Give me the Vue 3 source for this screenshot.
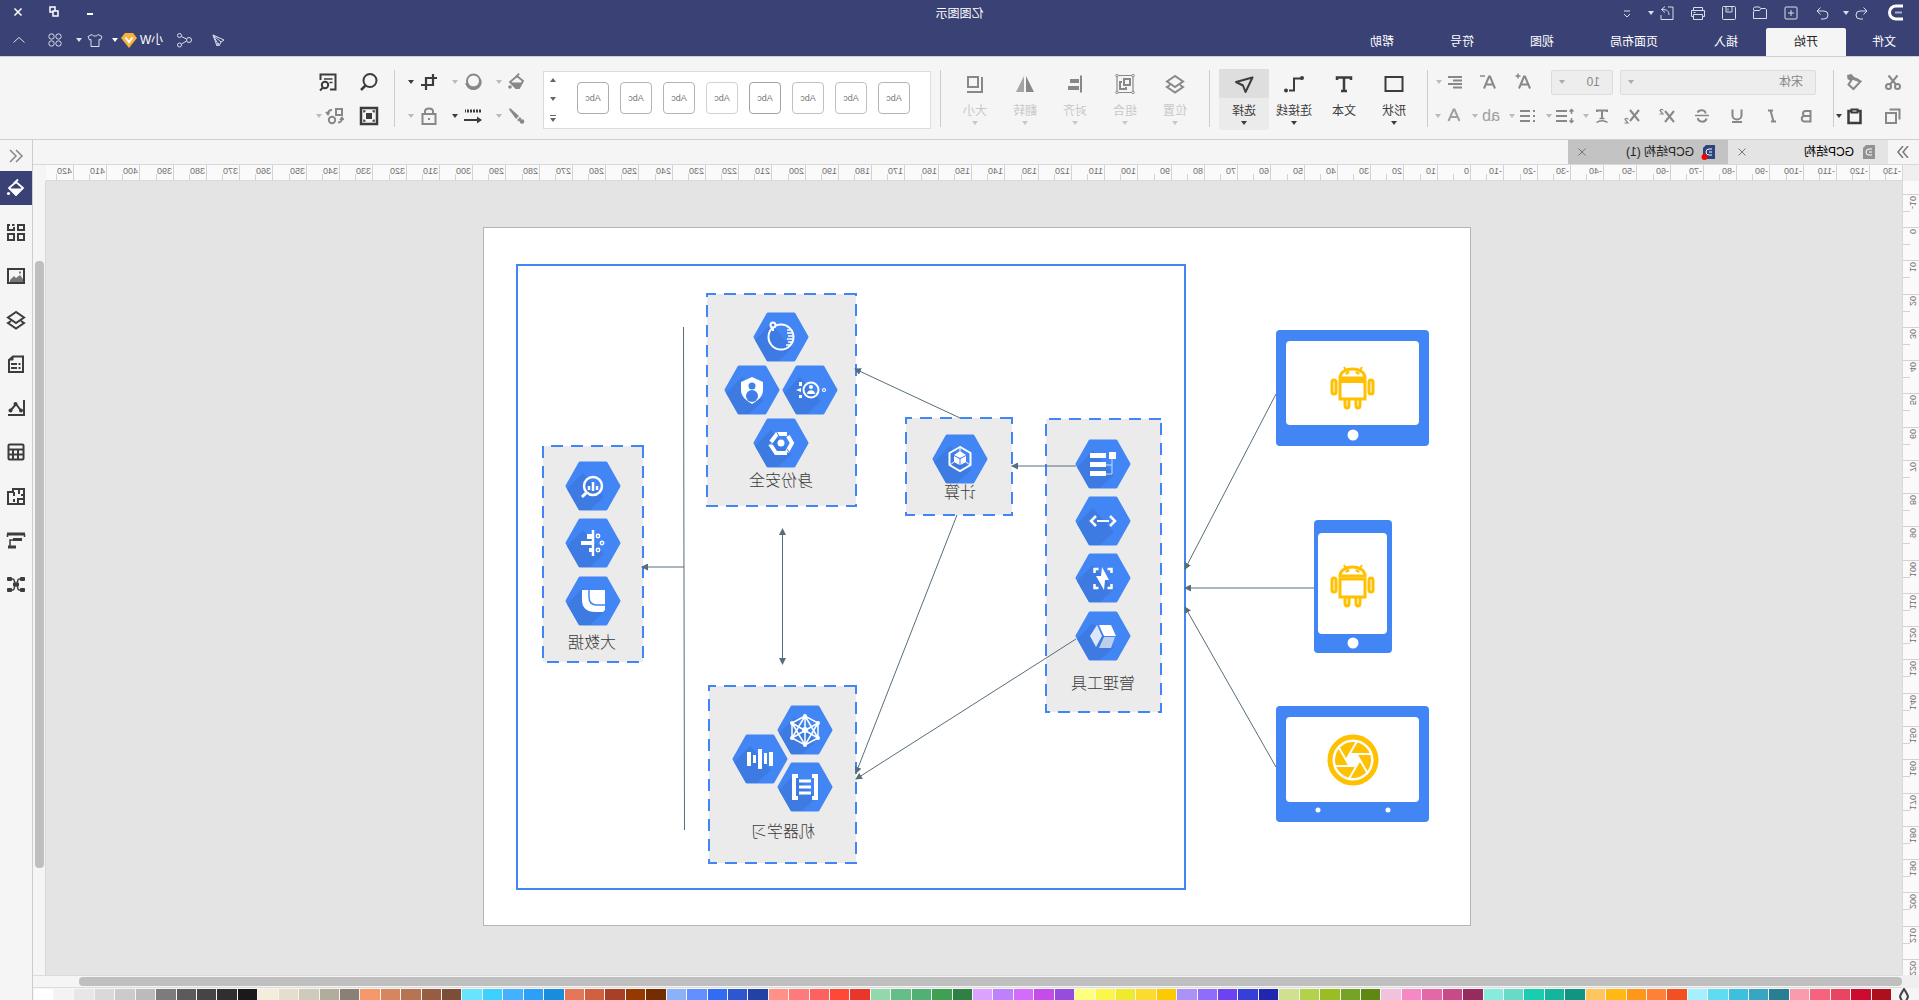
<script setup>
import { h } from 'vue'

/* 20x20 line glyphs, drawn in the writing direction of the text */
const glyphs = {
  undo: '<path d="M5 8h7a4 4 0 0 1 0 8H9M8.500 4.500L5 8l3.500 3.500"/>',
  redo: '<path d="M15 8H8a4 4 0 0 0 0 8h3M11.500 4.500L15 8l-3.500 3.500"/>',
  add: '<rect x="4" y="4" width="12" height="12" rx="1"/><path d="M10 7v6M7 10h6"/>',
  open: '<path d="M3.500 15.500V6.500l1-1H9l1.500 2H15l1.500 1v7zM9.500 5.500l1-1.500h5l1 1.500v2"/>',
  save: '<rect x="3.500" y="3.500" width="13" height="13" rx="1"/><path d="M7 4v5h6V4M11 5.500v2"/>',
  print: '<path d="M5.500 7.500v-3h9v3M5.500 13.500h-2v-6h13v6h-2M5.500 11.500h9v5h-9zM12.500 9.500h2"/>',
  export: '<path d="M9 4H4v12.500h12V12M8 12c0-4 2-5.500 7-5.500M12 3.500l3.500 3L12 9.500"/>',
  more: '<path d="M7 8h6M7 11l3 3 3-3"/>',
  min: '<path stroke-width="2" d="M7 12h6"/>',
  restore: '<path stroke-width="1.500" d="M6 9h5v5H6zM9 8.500V5h5v5h-2.500"/>',
  close: '<path stroke-width="1.500" d="M6.500 6.500l7 7M13.500 6.500l-7 7"/>',
  shut: '<path d="M6.500 6.500l7 7M13.500 6.500l-7 7"/>',
  send: '<path d="M16 5L5 10l3 2 2 4zM16 5l-8 7M16 5l-4 11-2-3"/>',
  share: '<circle cx="5" cy="10" r="2.500"/><circle cx="14.500" cy="5.500" r="2"/><circle cx="14.500" cy="15" r="2"/><path d="M7.500 9l5-2.500M7.500 11l5 3"/>',
  shirt: '<path d="M7 4.500c1 2 5 2 6 0l4 2-1.500 3.500-1.500-.5v7H6v-7l-1.500.5L3 6.500z"/>',
  four: '<circle cx="6.500" cy="6.500" r="2.700"/><circle cx="13.500" cy="6.500" r="2.700"/><circle cx="6.500" cy="13.500" r="2.700"/><circle cx="13.500" cy="13.500" r="2.700"/>',
  up: '<path d="M4.500 12.500L10 7.500l5.500 5"/>',
  cut: '<g stroke-width="2"><circle cx="5.500" cy="14.500" r="2.500"/><circle cx="14.500" cy="14.500" r="2.500"/><path d="M7 12.500L14.500 3.500M13 12.500L5.500 3.500"/></g>',
  brush: '<path stroke-width="2" d="M4.500 9.500l8-3 4 6-5 4.500z"/><path fill="currentColor" stroke="none" d="M4 10l2-3 5-2 2.500-3L18 3l-.5 4-3 2-2-1.500z"/>',
  copy: '<g stroke-width="2"><rect x="7" y="7" width="10" height="10"/><path d="M3.500 13.500v-10h10"/></g>',
  paste: '<path stroke-width="2.500" d="M7 5H4.500v12h12V5H14"/><path stroke-width="2" d="M7.500 3.500h6v3h-6z"/>',
  bigger: '<path stroke-width="2" d="M3 16.500L8 4.500h1l5 12M5 12.500h7"/><path stroke-width="1.500" d="M15 1.500v5M12.500 4h5"/>',
  smaller: '<path stroke-width="2" d="M3 16.500L8 4.500h1l5 12M5 12.500h7"/><path stroke-width="1.500" d="M13 4h5"/>',
  align: '<path stroke-width="2" d="M3 5h14M3 8.500h9M3 12h14M3 15.500h9"/>',
  bold: '<path stroke-width="2" d="M6.500 5h5a2.300 2.300 0 0 1 0 5h-5zM6.500 10h6a2.500 2.500 0 0 1 0 5.500h-6z"/>',
  italic: '<path stroke-width="2" d="M9 4.500h5M6 15.500h5M11.500 4.500l-3 11"/>',
  under: '<path stroke-width="2" d="M5.500 3.500v6a4.500 4 0 0 0 9 0v-6M5 16h10"/>',
  strike: '<path stroke-width="2" d="M14.500 6.500C13 3 6 3.500 6.500 7.500M5.500 12.500c1 4.500 9 4 8.500-.5"/><path stroke-width="1.500" d="M3 9.500h14"/>',
  sup: '<path stroke-width="2" d="M3 5l9 11M12 5L3 16"/><path stroke-width="1.200" d="M14 4.500c0-1.500 3-1.500 3 0L14 8h3.500"/>',
  sub: '<path stroke-width="2" d="M3 4l9 11M12 4L3 15"/><path stroke-width="1.200" d="M14 13.500c0-1.500 3-1.500 3 0L14 17h3.500"/>',
  tstyle: '<path stroke-width="2" d="M5 6V4.500h10V6M10 4.500v8"/><path stroke-width="1.500" d="M7.500 12.500h5M4.500 16.500c3-2.500 8-2.500 11 0"/>',
  spacing: '<path stroke-width="2" d="M8 5h11M8 10h11M8 15h11"/><path stroke-width="1.500" d="M3.500 4v4M3.500 12v4M1.500 5.500l2-2 2 2M1.500 14.500l2 2 2-2"/>',
  bullets: '<path stroke-width="2" d="M8 5h10M8 10h10M8 15h10M3 5h2M3 10h2M3 15h2"/>',
  fontcolor: '<path stroke-width="2" d="M4.500 15L9.500 3.500h1l5 11.500M6.500 11h7"/>',
  rect: '<path stroke-width="2" d="M1.500 3h17v14h-17z"/>',
  text: '<path stroke-width="2.500" d="M3 6V3.500h14V6M10 3.500V17M7 17h6"/>',
  connector: '<path stroke-width="2" d="M1.500 4.500H10v12h5"/><circle cx="2" cy="4" r="2" fill="currentColor" stroke="none"/><circle cx="18" cy="16.500" r="2" fill="currentColor" stroke="none"/>',
  pointer: '<path stroke-width="2" stroke-linejoin="round" d="M1.500 3.500L18 8l-7 3.500L8.500 18z"/>',
  layers: '<path stroke-width="2" d="M10 2l8 5.500-8 5.500-8-5.500zM5 11l-3 2 8 5.500 8-5.500-3-2"/>',
  group: '<path stroke-width="1.200" d="M2 1.500h16v17H2z"/><path stroke-width="2" d="M5 5h6v6H5zM13 8h2v7H9v-2"/><g fill="#f5f5f5" stroke-width="1"><circle cx="2" cy="1.500" r="1.300"/><circle cx="18" cy="1.500" r="1.300"/><circle cx="2" cy="18.500" r="1.300"/><circle cx="18" cy="18.500" r="1.300"/></g>',
  alignobj: '<path stroke-width="2" d="M4 1.500v17"/><path stroke="none" fill="currentColor" d="M6 5h9v4H6zM6 12h11v4H6z"/>',
  flip: '<path stroke="none" fill="currentColor" d="M9 2v16H1z"/><path stroke="none" fill="currentColor" opacity=".75" d="M11 2v16h8z"/>',
  size: '<path stroke-width="2" d="M7 3h10v10H7zM3 3v15h15"/>',
  fill: '<path stroke-width="1.800" d="M4 9l6-5 7 6-6 6H8z"/><path stroke="none" fill="currentColor" d="M4 10.500h12L11 17H8z"/><path stroke-width="1.800" d="M8 1.500l3 4"/><circle cx="17" cy="15" r="1.800" stroke="none" fill="currentColor"/>',
  pen: '<path stroke="none" fill="currentColor" d="M17 2l1 1.500-7 9.500-3-3zM7 11l3 3-2 1.500L5.500 13z"/><circle cx="5" cy="15.500" r="2.300" stroke="none" fill="currentColor"/>',
  shadow: '<path stroke="none" fill="currentColor" d="M2 7a8 8 0 1 0 15 6z"/><circle cx="9.500" cy="9" r="6.500" stroke-width="2" fill="#f5f5f5"/><path stroke-width="2" d="M5 14a8 8 0 0 0 12-3"/>',
  lines: '<path stroke-width="3" stroke-dasharray="2 1" d="M2 5h16"/><path stroke-width="2" d="M4 14h15"/><path stroke="none" fill="currentColor" d="M1 14l5-3.500v7z"/>',
  crop: '<path stroke-width="2.200" d="M6 2v11h12M2 6h11v12"/>',
  lock: '<rect x="3.500" y="8" width="13" height="10" stroke-width="2"/><path stroke-width="2" d="M6 8V5.500C6 1.500 14 1.500 14 5.500V8"/><path stroke-width="2" d="M9 13h2"/>',
  search: '<circle cx="9" cy="8.500" r="6.500" stroke-width="2"/><path stroke-width="2.500" d="M13.500 13.500L18 18"/>',
  fit: '<path stroke-width="2.500" d="M2 2h16v16H2z"/><path stroke="none" fill="currentColor" d="M7 7h6v6H7z"/><path stroke-width="1.500" d="M5 6.500V5h1.500M13.500 5H15v1.500M5 13.500V15h1.500M13.500 15H15v-1.500"/>',
  find: '<path stroke-width="2" d="M8 17.500H2.500v-15h15V8"/><path stroke-width="1.500" d="M5.500 7H14M5.500 10.500h3"/><circle cx="13" cy="13" r="3.200" stroke-width="2"/><path stroke-width="2" d="M15 15.500l3 3"/>',
  replace: '<path stroke-width="2" d="M3 3h6v6H3z"/><circle cx="13" cy="14" r="3.200" stroke-width="2"/><path stroke-width="1.800" d="M13 4c3 0 4 1 4 4M15.500 6l1.500 2.500L19 6M3 12c0 3 1 4.500 4 4.500M1.500 14l1.500-2.500L5 14"/>',
  dashes: '<path stroke-width="1.500" d="M10 4l-6 6 6 6M16 4l-6 6 6 6"/>',
  bucket: '<path stroke-width="1.800" d="M3 10l7-6 7 6-7 7z"/><path stroke="none" fill="currentColor" d="M3 10.500h14L10 18z"/><path stroke-width="2" d="M8 1.500l4 4"/><circle cx="17.500" cy="15.500" r="1.600" stroke="none" fill="currentColor"/>',
  apps: '<path stroke-width="2" d="M2 3h6v5H2zM2 12h6v6H2zM12 12h6v6h-6zM12 5v3h6V3h-2M11.500 3H14"/>',
  image: '<path stroke-width="2" d="M2 3h16v14H2z"/><path stroke="none" fill="#777" d="M3 16v-3l3-4 4 3 2-2 4 4v2z"/><path stroke-width="2" stroke="#777" d="M5 6.500h2"/>',
  note: '<path stroke-width="2" d="M3 2.500h10L17 6v12H3zM9 10h6M9 14h6M5.500 10h2M5.500 14h2"/><path fill="currentColor" d="M13 2.500V6h4z"/>',
  chart: '<path stroke-width="2" d="M2 2v15h16M5.500 12L10 6l5 6"/><g stroke="none" fill="currentColor"><circle cx="5" cy="12.500" r="2"/><circle cx="10.500" cy="6" r="2"/><circle cx="15.500" cy="12.500" r="2"/></g>',
  table: '<rect x="2.500" y="2.500" width="15" height="15" rx="1" stroke-width="2"/><path stroke-width="2" d="M3 7.500h14M3 12.500h14M8 8v9M13 8v9"/>',
  plan: '<path stroke-width="2" d="M2 3h11v3h5v12H2zM2 9h3M7 3v5M12 6v4M2 13h6M8 12v6M12 13v3"/>',
  gantt: '<path stroke-width="3" d="M1 4h18"/><path stroke-width="1.500" d="M8 10h8v6"/><path stroke-width="3" d="M4 9.500h9M10 17h8"/><path stroke-width="1.500" d="M1.500 4v3M18.500 4v3"/>',
  mind: '<path stroke-width="1.500" d="M3 5h4c2 0 1 5 3 5s1-5 3-5h4M3 16h4c2 0 1-6 3-6s1 6 3 6h4"/><g stroke="none" fill="currentColor"><rect x="1" y="3" width="5" height="4" rx="1"/><rect x="14" y="3" width="5" height="4" rx="1"/><rect x="1" y="14" width="5" height="4" rx="1"/><rect x="14" y="14" width="5" height="4" rx="1"/><rect x="7" y="8.500" width="6" height="4" rx="1"/></g>',
  drop: '<path stroke-width="2" d="M10 4c-3 5-4 6-4 8l2 4h4l2-4c0-2-1-3-4-8z"/>'
}

const Icon = (props) =>
  h('svg', {
    viewBox: '0 0 20 20',
    width: 20,
    height: 20,
    fill: 'none',
    stroke: 'currentColor',
    'aria-hidden': 'true',
    innerHTML: glyphs[props.name]
  })
Icon.props = ['name']

const Caret = () =>
  h('svg', { class: 'caret', viewBox: '0 0 6 4', width: 6, height: 4, fill: 'currentColor', 'aria-hidden': 'true' }, [
    h('path', { d: 'M0 0h6L3 4z' })
  ])

const quick = [
  { icon: 'undo', label: '撤销', caret: true },
  { icon: 'redo', label: '恢复' },
  { icon: 'add', label: '新建' },
  { icon: 'open', label: '打开' },
  { icon: 'save', label: '保存' },
  { icon: 'print', label: '打印' },
  { icon: 'export', label: '导出', caret: true },
  { icon: 'more', label: '更多' }
]
const menus = ['文件', '开始', '插入', '页面布局', '视图', '符号', '帮助']
const fontRow = [
  ['bold', '加粗'], ['italic', '斜体'], ['under', '下划线'],
  ['strike', '删除线'], ['sup', '上标'], ['sub', '下标']
]
const paraRow = [['tstyle', '文字样式'], ['spacing', '行距'], ['bullets', '项目符号']]
const tools = [
  { icon: 'rect', label: '形状', caret: true },
  { icon: 'text', label: '文本' },
  { icon: 'connector', label: '连接线', caret: true },
  { icon: 'pointer', label: '选择', caret: true, active: true }
]
const arrange = [
  { icon: 'layers', label: '位置' },
  { icon: 'group', label: '组合' },
  { icon: 'alignobj', label: '对齐' },
  { icon: 'flip', label: '翻转' },
  { icon: 'size', label: '大小' }
]
const themes = ['#b4b4b4', '#c0c0c0', '#c0c0c0', '#a4a4a4', '#d2d2d2', '#b4b4b4', '#b4b4b4', '#acacac']
const effects = [
  [
    { icon: 'fill', label: '填充', tone: 'mid', c: 'light' },
    { icon: 'shadow', label: '阴影', tone: 'mid', c: 'light' },
    { icon: 'crop', label: '裁剪', tone: 'dark', c: 'dark' }
  ],
  [
    { icon: 'pen', label: '线条', tone: 'mid', c: 'light' },
    { icon: 'lines', label: '线型', tone: 'dark', c: 'dark' },
    { icon: 'lock', label: '锁定', tone: 'mid', c: 'light' }
  ]
]
const side = [
  ['bucket', '样式'], ['apps', '符号库'], ['image', '图片'], ['layers', '图层'], ['note', '页面'],
  ['chart', '图表'], ['table', '表格'], ['plan', '平面图'], ['gantt', '甘特图'], ['mind', '思维导图']
]

/* Rulers: ten units span a little over 33 pixels */
const UNIT = 3.3265
const range = (from, to) => Array.from({ length: (to - from) / 10 + 1 }, (_, i) => from + i * 10)
const hMarks = range(-130, 420).map((v) => ({ v, at: Math.round(431 + v * UNIT) }))
const vMarks = range(-10, 220).map((v) => ({ v, at: Math.round(46 + v * UNIT) }))

const palette = (
  'ad0f1f cb0c2f e84562 f6637f f99bad 277f93 36a6c2 3dbfde 5fdbf2 a5efff f25022 ff8037 ff9819 ffb814 ffc65f ' +
  '119480 15b59d 1bcdb0 68dac8 87ecdd 962b60 c74a8b e467a8 f887c6 f2c1de 5d8811 76a227 99bd23 b3d24b d1e08f ' +
  '2026ae 3540d8 6c42f2 8f6cf9 ab92f7 fbca00 fbdc2e f0ea2e fbf64a fcff80 984cdd c44de8 d46bfb be80fc dba3ff ' +
  '2f8044 3fa054 51b074 64be88 92d8ac e8362a ff4836 ff6161 ff7b7b ff9188 2342a6 2c57d1 336cf4 658eff 8bb1f6 ' +
  '732d00 963900 a84026 d16040 e37757 1a8cdc 2e9ff6 43b1ff 3ed0fe 68e4ff 7b4e37 965d43 b77452 d5865f f5996c ' +
  '8b8076 b1ad9d cfcbba e5decd f4eddb 1a1a1a 2f2f2f 454545 5b5b5b 7c7c7c bbbbbb cbcbcb d9d9d9 e7e7e7 f3f3f3 ffffff'
).split(' ')

/* Diagram, in page coordinates */
const boxes = [
  { x: 309, y: 191, w: 115, h: 293, label: '管理工具', tx: 367, ty: 461 },
  { x: 458, y: 190, w: 106, h: 97, label: '计算', tx: 510, ty: 270 },
  { x: 614, y: 66, w: 149, h: 212, label: '身份安全', tx: 689, ty: 258 },
  { x: 614, y: 458, w: 147, h: 177, label: '机器学习', tx: 687, ty: 609 },
  { x: 827, y: 218, w: 100, h: 216, label: '大数据', tx: 878, ty: 420 }
]
const hexes = [
  { x: 367, y: 236, g: '<path fill="#fff" d="M-3-11h16v5H-3zM-3-2h16v5H-3zM-3 7h16v5H-3zM-13-12h7v7h-7z"/><path stroke="#c9dafb" d="M-9-5v15h6M-9 1h6"/>' },
  { x: 367, y: 293, g: '<path stroke="#fff" stroke-width="2.500" d="M-7-5l-5 5 5 5M7-5l5 5-5 5"/><path stroke="#fff" stroke-width="2" d="M-6 0H6"/>' },
  { x: 367, y: 350, g: '<path stroke="#fff" stroke-width="2.500" d="M-8.500-5v-4h4M8.500-5v-4h-4M-8.500 6v4h4M8.500 6v4h-4"/><path fill="#fff" d="M1-11L-6 2h4l1 10L7-2H2z"/>' },
  { x: 367, y: 408, g: '<path fill="#fff" d="M4-11H-8l-5 11H-1z"/><path fill="#dde7f8" d="M6-11L13 0 7 11 1 0z"/><path fill="#bcd0ee" d="M-1 1h-11l4 11H4z"/>' },
  { x: 510, y: 231, g: '<path stroke="#fff" stroke-width="2" d="M0-12L10.500-6V6L0 12-10.500 6V-6z"/><path fill="#fff" d="M0-8L6-4 0-1-6-4zM-6-3l5.500 3v6L-6 3zM6-3L.5 0v6L6 3z"/><path stroke="#fff" d="M0-12v4M-10 6l4-3M10 6L6 3"/>' },
  { x: 689, y: 109, g: '<circle r="12.500" stroke="#fff" stroke-width="2"/><path stroke="#fff" stroke-width="1.500" d="M-11-7h5M-12-4h6M-12-1h5M-12 2h6M-12 5h5M-10 8h5"/><circle cx="8" cy="-12" r="2.500" fill="#4285f4" stroke="#fff" stroke-width="2"/><path stroke="#fff" stroke-width="2" d="M8-9v3"/>' },
  { x: 718, y: 162, g: '<path fill="#fff" d="M0-13L11-8V0C11 7 5 11 0 14-5 11-11 7-11 0V-8z"/><circle cy="-4" r="3.500" fill="#3f7fe8"/><circle cy="6" r="6" fill="#3f7fe8"/>' },
  { x: 660, y: 162, g: '<circle cx="-1" r="7.500" stroke="#fff" stroke-width="2"/><circle cx="-1" cy="-3" r="2" fill="#fff"/><path fill="#fff" d="M-5 4c0-5 8-5 8 0z"/><circle cx="-14" r="1.500" stroke="#fff" stroke-width="1.200"/><path fill="#fff" d="M8-8h3v4H8zM9-2l5 2-5 2zM8 5h3v3H8z"/>' },
  { x: 689, y: 215, g: '<path stroke="#fff" stroke-width="4" d="M-6-9H4l6 8M11 1L5 10H-6M-6 9l-5-9 4-7"/><path stroke="#4285f4" d="M5-12l-3 5M13 1H7M-10 12l4-6"/><circle r="3.500" fill="#fff"/>' },
  { x: 665, y: 502, g: '<path stroke="#fff" stroke-width="1.500" d="M0-14L13-7V8L0 15-13 8V-7zM0-14v29M-13-7L13 8M13-7L-13 8M0-14L-13 8M0-14L13 8M0 15L-13-7M0 15L13-7"/><circle r="3" fill="#fff"/><g fill="#fff"><circle cy="-14" r="2"/><circle cy="15" r="2"/><circle cx="13" cy="-7" r="2"/><circle cx="-13" cy="-7" r="2"/><circle cx="13" cy="8" r="2"/><circle cx="-13" cy="8" r="2"/></g>' },
  { x: 710, y: 531, g: '<path fill="#fff" d="M-13-7h4V7h-4zM-7-6h3V5h-3zM-2-10h4v20h-4zM4-4h3v8H4zM9-7h4V7H9z"/>' },
  { x: 665, y: 559, g: '<path stroke="#fff" stroke-width="4" d="M-7-11h-4v22h4M7-11h4v22H7"/><path stroke="#fff" stroke-width="3" d="M-6-6H6M-6 0H6M-6 6H6"/>' },
  { x: 877, y: 258, g: '<circle r="9" stroke="#fff" stroke-width="2.500"/><path stroke="#fff" stroke-width="3" d="M6 6l5 5"/><path stroke="#fff" stroke-width="2.500" d="M-4 0v4M0-4v9M4 0v4"/>' },
  { x: 877, y: 315, g: '<path stroke="#fff" stroke-width="2.500" d="M0-13v26"/><path fill="#fff" d="M0-9h6v5H0zM0-2h12v4H0zM0 5h4v4H0z"/><g stroke="#fff" stroke-width="1.500"><circle cx="-5" cy="-7" r="1.700"/><circle cx="-9" r="1.700"/><circle cx="-5" cy="7" r="1.700"/></g>' },
  { x: 877, y: 373, g: '<path fill="#fff" d="M-12-11h23V-1C11 7 6 11-2 11h-8l-2-2z"/><path stroke="#4285f4" stroke-width="1.500" d="M4-11v7c0 6-3 8-8 8h-8"/>' }
]
const links = [
  'M194 166L285 341', 'M156 360H285', 'M194 539L285 379', 'M394 238H458', 'M510 190L615 141',
  'M513 287L614 545', 'M394 411L614 551', 'M786 339H828'
]
const blades = [0, 60, 120, 180, 240, 300]
</script>

<template>
  <div class="app">
    <header>
      <div class="title-row">
        <div class="start">
          <svg class="logo" viewBox="0 0 16 17" width="16" height="17" fill="none" aria-hidden="true">
            <path d="M0 2h7a6 6 0 0 1 0 13H0" stroke="#fff" stroke-width="3" />
            <path d="M1 8.500h7" stroke="#a9aecb" stroke-width="2" />
          </svg>
          <div class="quick">
            <button v-for="q in quick" :key="q.icon" class="drop" :aria-label="q.label">
              <Icon :name="q.icon" /><Caret v-if="q.caret" />
            </button>
          </div>
        </div>
        <h1>亿图图示</h1>
        <div class="window">
          <button aria-label="最小化"><Icon name="min" /></button>
          <button aria-label="还原"><Icon name="restore" /></button>
          <button aria-label="关闭"><Icon name="close" /></button>
        </div>
      </div>
      <div class="menu-row">
        <nav>
          <button v-for="m in menus" :key="m" :class="{ current: m === '开始' }">{{ m }}</button>
        </nav>
        <div class="account">
          <button class="post" aria-label="发送"><Icon name="send" /></button>
          <button aria-label="分享"><Icon name="share" /></button>
          <button class="user">
            <span>小W</span>
            <svg viewBox="0 0 16 15" width="16" height="15" aria-hidden="true">
              <path d="M4 0h8l4 5-8 10L0 5z" fill="#f5b23f" />
              <path d="M4.500 4.500L8 9l3.500-4.500" fill="none" stroke="#fff" stroke-width="2" />
            </svg>
            <Caret />
          </button>
          <button class="drop" aria-label="主题"><Icon name="shirt" /><Caret /></button>
          <button aria-label="应用"><Icon name="four" /></button>
          <button class="fold" aria-label="收起"><Icon name="up" /></button>
        </div>
      </div>
    </header>

    <section class="ribbon">
      <div class="rows clip">
        <div class="row">
          <button class="slot" aria-label="剪切"><Icon name="cut" /></button>
          <button class="drop" aria-label="格式刷"><Icon name="brush" /></button>
        </div>
        <div class="row">
          <button class="slot" aria-label="复制"><Icon name="copy" /></button>
          <button class="drop dark" aria-label="粘贴"><Icon name="paste" /><Caret /></button>
        </div>
      </div>
      <i class="sep"></i>
      <div class="rows font">
        <div class="row">
          <label class="pick family"><select aria-label="字体"><option>宋体</option></select><Caret /></label>
          <label class="pick points"><select aria-label="字号"><option>10</option></select><Caret /></label>
          <button class="slot" aria-label="增大字号"><Icon name="bigger" /></button>
          <button class="slot" aria-label="减小字号"><Icon name="smaller" /></button>
          <button class="drop para" aria-label="对齐方式"><Icon name="align" /><Caret class="pale" /></button>
        </div>
        <div class="row">
          <button v-for="f in fontRow" :key="f[0]" class="slot" :aria-label="f[1]"><Icon :name="f[0]" /></button>
          <div class="paras">
            <button v-for="f in paraRow" :key="f[0]" class="drop para" :aria-label="f[1]">
              <Icon :name="f[0]" /><Caret class="pale" />
            </button>
            <button class="drop para soft"><span class="ab">ab</span><Caret class="pale" /></button>
            <button class="drop para soft" aria-label="字体颜色"><Icon name="fontcolor" /><Caret class="pale" /></button>
          </div>
        </div>
      </div>
      <i class="sep"></i>
      <div class="bigs">
        <button v-for="t in tools" :key="t.icon" class="big dark" :class="{ active: t.active }">
          <span class="pic"><Icon :name="t.icon" /></span>
          <span class="name">{{ t.label }}</span>
          <Caret v-if="t.caret" />
        </button>
      </div>
      <i class="sep"></i>
      <div class="bigs">
        <button v-for="t in arrange" :key="t.icon" class="big off" disabled>
          <span class="pic"><Icon :name="t.icon" /></span>
          <span class="name">{{ t.label }}</span>
          <Caret />
        </button>
      </div>
      <i class="sep"></i>
      <div class="gallery">
        <button v-for="(t, i) in themes" :key="i" class="theme" :style="{ borderColor: t }">Abc</button>
        <div class="spin">
          <button aria-label="上一行"><svg width="6" height="4" viewBox="0 0 6 4"><path d="M0 4h6L3 0z" fill="#666" /></svg></button>
          <button aria-label="下一行"><Caret /></button>
          <button aria-label="全部"><svg width="6" height="7" viewBox="0 0 6 7"><path d="M0 0h6v1H0zM0 3h6L3 7z" fill="#666" /></svg></button>
        </div>
      </div>
      <div class="rows effects">
        <div v-for="(r, i) in effects" :key="i" class="row">
          <button v-for="e in r" :key="e.icon" class="drop wide" :class="e.tone" :aria-label="e.label">
            <Icon :name="e.icon" /><Caret :class="{ pale: e.c === 'light' }" />
          </button>
        </div>
      </div>
      <i class="sep"></i>
      <div class="rows lookup">
        <div class="row dark">
          <button class="slot" aria-label="查找"><Icon name="search" /></button>
          <button class="slot" aria-label="查找文档"><Icon name="find" /></button>
        </div>
        <div class="row">
          <button class="slot dark" aria-label="适应页面"><Icon name="fit" /></button>
          <button class="drop repl" aria-label="替换"><Icon name="replace" /><Caret class="pale" /></button>
        </div>
      </div>
    </section>

    <div class="body">
      <main>
        <div class="docs">
          <button class="expand" aria-label="展开"><svg width="12" height="12" viewBox="0 0 12 12" fill="none" stroke="#777" stroke-width="1.500"><path d="M1 0l5 6-5 6M6 0l5 6-5 6" /></svg></button>
          <div class="doc">
            <svg width="12" height="14" viewBox="0 0 12 14" fill="none" aria-hidden="true">
              <path d="M0 0h9l3 3v11H0z" fill="#929292" /><path d="M3 4h3a3 3 0 0 1 0 6H3M3 7h3" stroke="#fff" />
            </svg>
            <span>GCP结构</span>
            <button aria-label="关闭标签"><Icon name="shut" /></button>
          </div>
          <div class="doc open">
            <svg width="12" height="14" viewBox="0 0 12 14" fill="none" aria-hidden="true">
              <path d="M0 0h9l3 3v11H0z" fill="#2c447c" /><path d="M3 4h3a3 3 0 0 1 0 6H3M3 7h3" stroke="#fff" />
              <circle cx="10.500" cy="12" r="3" fill="#f00" />
            </svg>
            <span>GCP结构 (1)</span>
            <button aria-label="关闭标签"><Icon name="shut" /></button>
          </div>
        </div>

        <div class="work">
          <div class="corner"></div>
          <svg class="hruler" aria-hidden="true">
            <g v-for="m in hMarks" :key="m.v">
              <rect :x="m.at" y="0" width="1" height="16" />
              <rect :x="m.at + 17" y="9" width="1" height="7" />
              <text :x="m.at + 2" y="9">{{ m.v }}</text>
            </g>
          </svg>
          <div class="blank"></div>
          <svg class="vruler" aria-hidden="true">
            <g v-for="m in vMarks" :key="m.v">
              <rect x="0" :y="m.at" width="16" height="1" />
              <rect x="9" :y="m.at + 17" width="7" height="1" />
              <text text-anchor="end" :transform="`translate(9 ${m.at + 2}) rotate(-90)`">{{ m.v }}</text>
            </g>
          </svg>
          <div class="canvas">
            <svg class="page" viewBox="0 0 986 697" width="986" height="697" fill="none">
              <defs>
                <marker id="tip" viewBox="0 0 7 7" refX="6" refY="3.500" markerWidth="7" markerHeight="7" markerUnits="userSpaceOnUse" orient="auto-start-reverse">
                  <path d="M0 0l7 3.500L0 7z" fill="#566e7b" />
                </marker>
                <g id="hex">
                  <path d="M-26 0l13-23h26L26 0 13 23h-26z" fill="#4285f4" stroke="#4285f4" stroke-width="3" stroke-linejoin="round" />
                  <path d="M10-13L26 3 14 24H3L-11 11z" fill="#3d7be2" />
                </g>
                <g id="droid" stroke="#ffc000">
                  <rect x="-12" y="14" width="25" height="18" stroke-width="3" />
                  <path d="M-12 11C-12-1 13-1 13 11z" stroke-width="3" />
                  <path d="M-9 0l3 5M9 0L6 5" stroke-width="2" />
                  <path d="M-5 5l1 2M6 5L5 7" stroke-width="4" />
                  <rect x="-20" y="13" width="4" height="14" rx="2" stroke-width="3" />
                  <rect x="17" y="13" width="4" height="14" rx="2" stroke-width="3" />
                  <path d="M-7 32v6c0 4 4 4 4 0v-6M4 32v6c0 4 4 4 4 0v-6" stroke-width="3" />
                </g>
              </defs>

              <rect x="285" y="37" width="668" height="624" stroke="#4285f4" stroke-width="2" />

              <g fill="#4285f4">
                <rect x="41" y="102" width="153" height="116" rx="4" />
                <rect x="78" y="292" width="78" height="133" rx="4" />
                <rect x="41" y="478" width="153" height="116" rx="4" />
              </g>
              <g fill="#fff">
                <rect x="51" y="113" width="133" height="84" rx="4" />
                <rect x="83" y="305" width="69" height="101" rx="4" />
                <rect x="51" y="489" width="133" height="85" rx="4" />
                <circle cx="117" cy="207" r="5.500" />
                <circle cx="117" cy="415" r="5.500" />
                <circle cx="82" cy="582" r="2.500" />
                <circle cx="152" cy="582" r="2.500" />
              </g>
              <use href="#droid" x="117" y="139" />
              <path d="M105 151h25v4h-25z" fill="#ffc000" />
              <use href="#droid" x="117" y="337" />
              <circle cx="117" cy="532" r="23" stroke="#ffc000" stroke-width="5" />
              <g transform="translate(117 532)">
                <circle r="18" fill="#ffc000" />
                <path d="M4-6L7 0 4 6H-4L-7 0-4-6z" fill="#fff" />
                <path v-for="a in blades" :key="a" :transform="`rotate(${a})`" d="M4-6H-18" stroke="#fff" stroke-width="2" />
              </g>

              <g v-for="b in boxes" :key="b.label">
                <rect :x="b.x" :y="b.y" :width="b.w" :height="b.h" fill="#ebebeb" stroke="#4285f4" stroke-width="2" stroke-dasharray="12 8" />
                <text :x="b.tx" :y="b.ty" text-anchor="middle">{{ b.label }}</text>
              </g>

              <g stroke="#566e7b">
                <path v-for="l in links" :key="l" :d="l" marker-end="url(#tip)" />
                <path d="M687.500 301V436" marker-start="url(#tip)" marker-end="url(#tip)" />
                <path d="M786.500 99L785.500 602" />
              </g>

              <g v-for="(x, i) in hexes" :key="i" :transform="`translate(${x.x} ${x.y})`">
                <use href="#hex" />
                <g v-html="x.g"></g>
              </g>
            </svg>
          </div>
          <div class="vscroll"><div class="thumb"></div></div>
          <div class="corner low"></div>
          <div class="hscroll"><div class="thumb"></div></div>
        </div>

        <div class="palette">
          <span class="dropper"><Icon name="drop" /></span>
          <button v-for="(c, i) in palette" :key="i" :aria-label="'#' + c" :style="{ background: '#' + c }"></button>
        </div>
      </main>

      <aside>
        <button class="collapse" aria-label="折叠面板"><Icon name="dashes" /></button>
        <button v-for="(s, i) in side" :key="s[0]" :class="{ on: i === 0 }" :aria-label="s[1]"><Icon :name="s[0]" /></button>
      </aside>
    </div>
  </div>
</template>

<style>
body {
  margin: 0;
  background: #f5f5f5;
}
</style>

<style scoped>
/* The whole window is shown as seen in a mirror */
.app {
  display: flex;
  flex-direction: column;
  height: 100vh;
  overflow: hidden;
  transform: scaleX(-1);
  background: #f5f5f5;
  color: #222;
  font: 12px/16px "Liberation Sans", "Noto Sans CJK SC", sans-serif;
}
button {
  display: flex;
  align-items: center;
  justify-content: center;
  flex: none;
  padding: 0;
  border: 0;
  background: none;
  color: inherit;
  font: inherit;
}
svg {
  display: block;
  flex: none;
}

header {
  flex: none;
  background: #3a4174;
  color: #fff;
}
.title-row {
  display: grid;
  grid-template-columns: 1fr auto 1fr;
  align-items: center;
  height: 28px;
}
.start {
  display: flex;
  align-items: center;
  padding: 0 0 3px 16px;
}
.quick {
  display: flex;
  gap: 11px;
  margin-left: 15px;
  color: #dcdeea;
}
h1 {
  margin: 0;
  font-size: 12px;
  font-weight: 400;
  line-height: 28px;
}
.window {
  display: flex;
  justify-content: flex-end;
  padding-bottom: 4px;
}
.window button {
  width: 36px;
  height: 24px;
}
.drop {
  gap: 3px;
  justify-content: flex-start;
}
.menu-row {
  display: flex;
  justify-content: space-between;
  height: 28px;
}
nav {
  display: flex;
}
nav button {
  padding: 0 28px;
}
nav button:first-child {
  padding: 0 26px 0 23px;
}
nav .current {
  border-radius: 2px 2px 0 0;
  background: #f5f5f5;
  color: #222;
}
.account {
  display: flex;
  gap: 11px;
  padding: 0 9px 4px 0;
  color: #dcdeea;
}
.user {
  gap: 3px;
  margin-right: -4px;
  color: #fff;
}
.post {
  margin-right: 4px;
}
.fold {
  margin-left: 5px;
}

.ribbon {
  display: flex;
  flex: none;
  height: 82px;
  border-top: 1px solid #d0d0d0;
  border-bottom: 1px solid #d0d0d0;
  color: #888;
}
.sep {
  flex: none;
  width: 1px;
  height: 57px;
  margin-top: 13px;
  background: #ccc;
}
.rows {
  flex: none;
  padding-top: 8px;
}
.row {
  display: flex;
  align-items: center;
  height: 34px;
}
.slot {
  width: 35px;
  height: 28px;
}
.clip {
  width: 77px;
  padding-left: 8px;
}
.clip .drop {
  margin-left: 11px;
}
.dark {
  color: #3c3c3c;
}
.mid {
  color: #888;
}
.pale {
  color: #bbb;
}
.font {
  width: 397px;
  padding-left: 8px;
}
.pick {
  position: relative;
  flex: none;
  height: 25px;
  margin-left: 7px;
}
.family {
  width: 196px;
  margin-left: 9px;
}
.points {
  width: 62px;
  margin-right: 10px;
}
.pick select {
  box-sizing: border-box;
  width: 100%;
  height: 25px;
  padding: 0 12px;
  appearance: none;
  border: 1px solid #dcdcdc;
  border-radius: 2px;
  background: #ededed;
  color: #888;
  font: inherit;
}
.pick .caret {
  position: absolute;
  top: 10px;
  right: 8px;
  color: #aaa;
}
.para {
  width: 37px;
}
.row > .para {
  margin-left: 6px;
}
.paras {
  display: flex;
  margin-left: 3px;
}
.soft {
  color: #a0a0a0;
}
.ab {
  width: 20px;
  font-size: 16px;
}
.bigs {
  display: flex;
  flex: none;
  padding: 12px 9px 0 9px;
}
.font + .sep + .bigs {
  padding-left: 8px;
}
.big {
  flex-direction: column;
  justify-content: flex-start;
  width: 50px;
  height: 61px;
  border-radius: 2px;
}
.big .pic {
  display: flex;
  align-items: center;
  justify-content: center;
  width: 100%;
  height: 29px;
}
.big .name {
  height: 16px;
  margin: 5px 0 2px;
}
.active {
  background: #ebebeb;
}
.active .pic {
  background: #dedede;
}
.off .pic {
  color: #888;
}
.off {
  color: #c8c8c8;
}
.gallery {
  display: flex;
  flex: none;
  gap: 11px;
  align-items: center;
  box-sizing: border-box;
  width: 388px;
  height: 58px;
  margin: 14px 0 0 9px;
  padding-left: 20px;
  border: 1px solid #dcdcdc;
  background: #fff;
}
.theme {
  box-sizing: border-box;
  width: 32px;
  height: 32px;
  margin-bottom: 5px;
  border: 1px solid;
  border-radius: 4px;
  color: #777;
  font-size: 9px;
}
.spin {
  display: flex;
  flex-direction: column;
  justify-content: space-between;
  height: 44px;
  margin-left: 10px;
  color: #666;
}
.effects {
  padding-left: 16px;
}
.wide {
  gap: 5px;
  width: 44px;
}
.lookup .slot {
  width: 41px;
}
.lookup {
  padding-left: 4px;
}
.repl {
  margin-left: 4px;
}

.body {
  display: flex;
  flex: 1;
  min-height: 0;
}
main {
  display: flex;
  flex: 1;
  flex-direction: column;
  min-width: 0;
}
.docs {
  display: flex;
  flex: none;
  height: 24px;
}
.expand {
  width: 31px;
}
.doc {
  display: flex;
  gap: 9px;
  align-items: center;
  box-sizing: border-box;
  width: 160px;
  padding: 0 4px 0 13px;
  background: #e4e4e4;
  color: #000;
}
.doc svg {
  overflow: visible;
}
.doc button {
  margin-left: auto;
  color: #777;
}
.doc.open {
  background: #c3c3c3;
  color: #222;
}
.work {
  display: grid;
  flex: 1;
  grid-template-columns: 17px 1fr 13px;
  grid-template-rows: 17px 1fr 13px;
  min-height: 0;
}
.corner,
.blank,
.hruler {
  box-sizing: border-box;
  border-top: 1px solid #d8d8d8;
}
.corner {
  border-right: 1px solid #d8d8d8;
  background: #efefef;
}
.low {
  border: 0;
}
.hruler,
.vruler {
  box-sizing: border-box;
  width: 100%;
  height: 100%;
  overflow: hidden;
  background: #fafafa;
}
.hruler {
  border-bottom: 1px solid #d8d8d8;
}
.vruler {
  border-right: 1px solid #d8d8d8;
}
.hruler rect,
.vruler rect {
  fill: #d2d2d2;
}
.hruler text,
.vruler text {
  fill: #707070;
  font-size: 9px;
}
.canvas {
  position: relative;
  overflow: hidden;
  background: #e4e4e4;
}
.page {
  position: absolute;
  top: 46px;
  left: 431px;
  border: 1px solid #b4b4b4;
  background: #fff;
}
.page text {
  fill: #3a3a3a;
  font-size: 16px;
  font-weight: 300;
}
.vscroll {
  padding: 80px 2px 0 1px;
  border-left: 1px solid #d8d8d8;
}
.vscroll .thumb {
  height: 85%;
  border-radius: 4px;
  background: #bfbfbf;
}
.hscroll {
  grid-column: 2 / 4;
  box-sizing: border-box;
  padding: 1px 46px 1px 0;
  border: 1px solid #dcdcdc;
  border-width: 1px 0;
}
.hscroll .thumb {
  height: 9px;
  border-radius: 4px;
  background: #bfbfbf;
}
.palette {
  display: flex;
  flex: none;
  gap: 1px;
  height: 12px;
  overflow: hidden;
}
.palette button {
  flex: 1 1 0;
  margin-top: 1px;
}
.dropper {
  flex: none;
  width: 20px;
  margin: -3px 2px 0 5px;
  color: #444;
}

aside {
  display: flex;
  flex: none;
  flex-direction: column;
  gap: 10px;
  width: 32px;
  border-left: 1px solid #ccc;
  color: #3c3c3c;
}
aside button {
  width: 100%;
  height: 34px;
}
aside .collapse {
  height: 31px;
  margin-bottom: -10px;
  color: #888;
}
aside .on {
  background: #3a4174;
  color: #fff;
}
</style>
